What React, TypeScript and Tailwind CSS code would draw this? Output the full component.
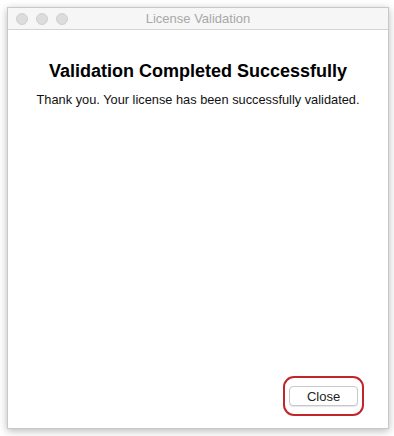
// License validation dialog, macOS style window

export default function App() {
  return (
    <div className="w-[394px] h-[436px] bg-white pt-[7px] pl-[7px] font-['Liberation_Sans',Arial,sans-serif]">
      <div className="w-[382px] h-[422px] flex flex-col bg-white border border-[#c8c8c8] shadow-[0_2px_8px_rgba(0,0,0,0.28)]">
        {/* Title bar */}
        <div className="relative h-[22px] flex items-center bg-[#f6f6f6] border-b border-[#d4d4d4]">
          <div className="flex gap-[8px] pl-[8px]">
            <span className="w-[12px] h-[12px] rounded-full bg-[#dcdcdc] border border-[#d0d0d0]" />
            <span className="w-[12px] h-[12px] rounded-full bg-[#dcdcdc] border border-[#d0d0d0]" />
            <span className="w-[12px] h-[12px] rounded-full bg-[#dcdcdc] border border-[#d0d0d0]" />
          </div>
          <div className="absolute inset-0 flex items-center justify-center text-[13px] text-[#a8a8a8]">
            License Validation
          </div>
        </div>

        {/* Body */}
        <div className="flex-1 flex flex-col items-center pt-[29px]">
          <h1 className="text-[18px] font-bold text-black leading-[24px]">Validation Completed Successfully</h1>
          <p className="mt-[8px] text-[12.8px] text-[#111] leading-[17px]">
            Thank you. Your license has been successfully validated.
          </p>
        </div>

        {/* Footer */}
        <div className="flex justify-end pr-[24px] pb-[12px]">
          <div className="rounded-[11px] border-2 border-[#c0262b] px-[4px] py-[8px]">
            <button className="block w-[69px] h-[20px] rounded-[4px] bg-white border border-[#c8c8c8] shadow-[0_1px_1px_rgba(0,0,0,0.1)] text-[13px] text-[#222] leading-none">
              Close
            </button>
          </div>
        </div>
      </div>
    </div>
  )
}
